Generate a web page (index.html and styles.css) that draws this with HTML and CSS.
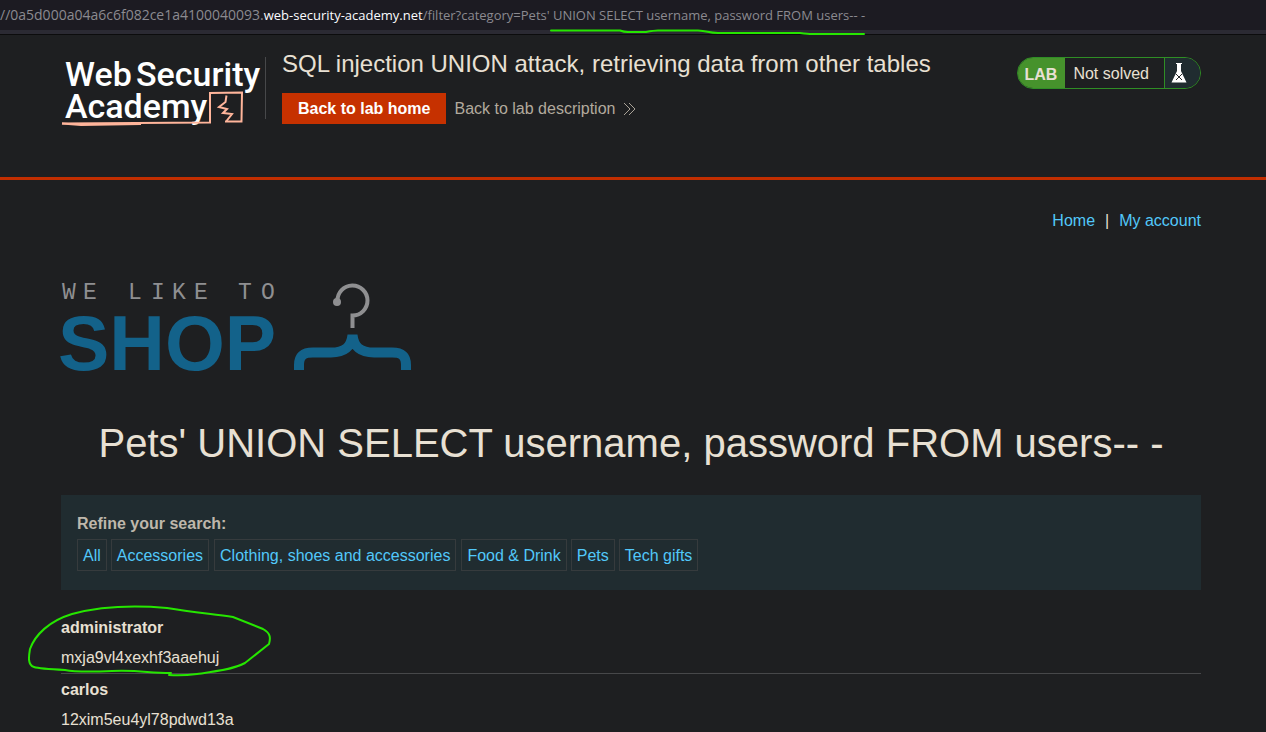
FILE: index.html
```html
<!DOCTYPE html>
<html lang="en">
<head>
<meta charset="utf-8">
<title>SQL injection UNION attack, retrieving data from other tables</title>
<link rel="stylesheet" href="styles.css">
</head>
<body>
<div class="address-bar">
  <span class="address"><span class="subdomain">//0a5d000a04a6c6f082ce1a4100040093.</span><span class="domain">web-security-academy.net</span>/filter?category=Pets' UNION SELECT username, password FROM users-- -</span>
  <svg class="underline" width="320" height="10" viewBox="0 0 320 10" aria-hidden="true"><path d="M3 3.500H72Q76 5 80 5H98Q106 3.500 110 3.500H150C160 4 160 6 170 6H252Q260 7 264 7H316"/></svg>
</div>
<header class="lab-header">
  <div class="container header-row">
    <a class="logo" href="#" aria-label="Web Security Academy">
      <svg width="204" height="76" viewBox="0 0 204 76">
        <g class="logo-text"><text x="4" y="34">Web</text><text x="75" y="34">Security</text><text x="4" y="66">Academy</text></g>
        <path class="logo-line" d="M1 71.500L149 70.500V41L181 40.500L180.500 69.500H164"/>
        <path class="logo-line tail" d="M1 71.500L20 73L80 72"/>
        <path class="logo-line bolt" d="M165.500 43.500L164.500 50L158 55L166 57L162 61L171 62L165.500 69"/>
      </svg>
    </a>
    <div class="title-block">
      <h2>SQL injection UNION attack, retrieving data from other tables</h2>
      <div class="actions">
        <a class="lab-home" href="#">Back to lab home</a>
        <a class="description" href="#">Back to lab description
          <svg width="14" height="14" viewBox="0 0 14 14" aria-hidden="true"><path d="M1 1L7 7L1 13M6 1L12 7L6 13"/></svg>
        </a>
      </div>
    </div>
    <div class="status">
      <span class="lab">LAB</span>
      <span class="state">Not solved</span>
      <span class="flask"><svg width="16" height="20" viewBox="0 0 16 20" aria-hidden="true"><path class="glass" d="M5 0H11V1H10V8L15.500 19.500H.5L6 8V1H5Z"/><path class="cross" d="M5 11L11 17M11 11L5 17"/></svg></span>
    </div>
  </div>
</header>
<main class="container">
  <nav class="account"><a href="#">Home</a><span>|</span><a href="#">My account</a></nav>
  <svg class="shop" width="352" height="92" viewBox="0 0 352 92" role="img" aria-label="We like to shop">
    <g class="tagline"><text x="1 22" y="18">WE</text><text x="67 90 111 133" y="18">LIKE</text><text x="177 200" y="18">TO</text></g>
    <text class="shop-word" x="-3" y="89">SHOP</text>
    <g class="hook"><path d="M276.500 20A15 15 0 1 1 291.500 34.500V47"/><circle cx="276" cy="21" r="4"/></g>
    <path class="hanger" d="M238 89V84C238 74 243 71.500 252 71.500H270C284 71.500 290 66 291.500 54C293 66 299 71.500 313 71.500H331C340 71.500 345 74 345 84V89"/>
  </svg>
  <h1>Pets' UNION SELECT username, password FROM users-- -</h1>
  <section class="filters">
    <strong>Refine your search:</strong>
    <div class="filter-list"><a href="#">All</a><a href="#">Accessories</a><a class="wide" href="#">Clothing, shoes and accessories</a><a class="wide" href="#">Food &amp; Drink</a><a href="#">Pets</a><a href="#">Tech gifts</a></div>
  </section>
  <table class="users">
    <tbody>
      <tr><th scope="row">administrator</th><td>mxja9vl4xexhf3aaehuj</td></tr>
      <tr><th scope="row">carlos</th><td>12xim5eu4yl78pdwd13a</td></tr>
    </tbody>
  </table>
  <svg class="circle" width="246" height="74" viewBox="0 0 246 74" aria-hidden="true"><path d="M144 68C120 68 115 65 85 66C60 67 48 67 38 65C18 64 10 63 7 62C0 60 2 50 3 44C8 30 22 16 45 9C75 1 105 0 140 3C165 7 185 9 206 12L236 24C243 28 244 32 242 39L218 58C205 65 185 67 170 69Q155 71 142 70"/></svg>
</main>
</body>
</html>
```
FILE: styles.css
```css
* { box-sizing: border-box; }
html { background: #1e1f21; }
body {
  margin: 0;
  color: #e8e0d3;
  font: 16px/20px "Liberation Sans", Arial, sans-serif;
}
a { color: #52c8fa; text-decoration: none; }
h1, h2 { margin: 0; font-weight: 400; }
.container { padding: 0 65px 0 61px; }

.address-bar {
  position: relative;
  height: 35px;
  background: #1c1b22;
  border-bottom: 1px solid #0c0c0d;
  box-shadow: inset 0 -4px #2b2a33;
  color: #8b8a90;
  font: 13px/30px "Open Sans", "Noto Sans", sans-serif;
  white-space: nowrap;
}
.subdomain { font-size: 14px; }
.domain { color: #fbfbfe; }
.underline { position: absolute; left: 548px; top: 27px; }
.underline path, .circle path { fill: none; stroke: #26e600; stroke-width: 2; stroke-linecap: round; }

.lab-header { height: 145px; border-bottom: 3px solid #c22e00; }
.header-row { display: flex; align-items: flex-start; padding-top: 16px; }
.logo { height: 76px; margin-top: 1px; }
.logo svg { display: block; }
.logo-text { fill: #fff; font: 500 34px Roboto, sans-serif; }
.logo-line { fill: none; stroke: #ffb59b; stroke-width: 2; }
.title-block { flex: 1; padding-left: 17px; position: relative; }
.title-block::before { content: ""; position: absolute; left: 0; top: 6px; height: 62px; width: 1px; background: #47484a; }
h2 { font-size: 24px; line-height: 26px; }
.actions { display: flex; align-items: center; gap: 8px; margin-top: 16px; }
.lab-home { padding: 6px 16px 5px; background: #c63100; color: #fff; font-weight: 700; }
.description { display: flex; align-items: center; gap: 8px; color: #b2aa9d; }
.description path { fill: none; stroke: #a9a297; stroke-width: 1; }
.status { display: flex; height: 32px; margin-top: 6px; border: 1px solid #2f8e25; border-radius: 16px; overflow: hidden; line-height: 31px; }
.lab { padding: 1px 8px 0 7px; background: #46922c; font-weight: 700; }
.state { padding: 0 15px 0 8px; }
.flask { padding: 5px 13px 0 6px; border-left: 1px solid #2f8e25; background: #202c30; }
.flask svg { display: block; }
.glass { fill: #fff; }
.cross { fill: none; stroke: #26292b; stroke-width: 1; }

main { position: relative; }
.account { display: flex; justify-content: flex-end; gap: 10px; padding-top: 31px; }
.shop { display: block; margin-top: 50px; overflow: visible; }
.tagline { fill: #8f8f91; font: 23px "Liberation Mono", monospace; }
.shop-word { fill: #13628a; font: 700 77px "Liberation Sans", Arial, sans-serif; }
.hook path { fill: none; stroke: #8f8f91; stroke-width: 4; }
.hook circle { fill: #8f8f91; }
.hanger { fill: none; stroke: #13628a; stroke-width: 10; }
h1 { margin-top: 46px; font-size: 40px; line-height: 48px; text-align: center; }
.filters { margin-top: 28px; padding: 19px 16px; background: #202c30; }
.filters strong { display: block; color: #beb7ab; }
.filter-list { display: flex; gap: 4px; margin-top: 5px; }
.filter-list a { padding: 6px 5px 4px; border: 1px solid #363b3d; }
.filter-list .wide { margin-left: 1px; }
.users { display: block; margin-top: 22px; }
.users tbody, .users tr, .users th, .users td { display: block; padding: 0; }
.users tr { padding: 6px 0 5px; }
.users tr:last-child { padding-bottom: 0; }
.users tr + tr { border-top: 1px solid #47484a; }
.users th { text-align: left; }
.users td { margin-top: 10px; }
.circle { position: absolute; left: 27px; top: 425px; }
```
